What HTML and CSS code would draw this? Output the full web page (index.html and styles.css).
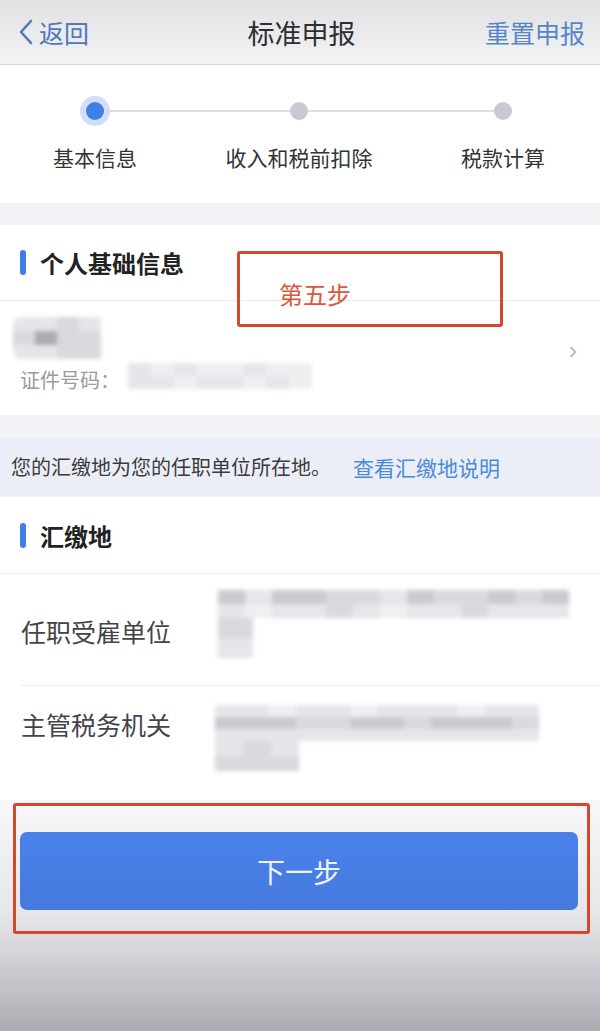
FILE: index.html
```html
<!DOCTYPE html>
<html lang="zh-CN">
<head>
    <meta charset="UTF-8">
    <meta name="viewport" content="width=device-width, initial-scale=1.0">
    <title>标准申报</title>
    <link rel="stylesheet" href="styles.css">
</head>
<body>
    <div class="page">
        <header class="nav">
            <a class="back">
                <svg class="back-icon" width="16" height="26" viewBox="0 0 16 26"><path d="M13 2 L3 13 L13 24" fill="none" stroke="#4f79b8" stroke-width="2.6" stroke-linecap="round" stroke-linejoin="round"/></svg>
                <span>返回</span>
            </a>
            <h1 class="title">标准申报</h1>
            <a class="reset">重置申报</a>
        </header>

        <section class="steps">
            <div class="track">
                <span class="dot active"></span>
                <span class="line"></span>
                <span class="dot"></span>
                <span class="line"></span>
                <span class="dot"></span>
            </div>
            <div class="labels">
                <span>基本信息</span>
                <span>收入和税前扣除</span>
                <span>税款计算</span>
            </div>
        </section>

        <section class="card personal">
            <div class="card-head"><span class="bar"></span>个人基础信息</div>
            <div class="person">
                <div class="person-info">
                    <div class="mosaic name">
                        <div class="mrow"><span class="g1"></span><span class="g1"></span><span class="g2"></span><span class="g1"></span></div>
                        <div class="mrow"><span class="g2"></span><span class="g4"></span><span class="g2"></span><span class="g2"></span></div>
                        <div class="mrow"><span class="g1"></span><span class="g1"></span><span class="g2"></span><span class="g2"></span></div>
                    </div>
                    <div class="id-row">
                        <span class="id-label">证件号码：</span>
                        <div class="mosaic idnum">
                            <div class="mrow"><span class="g1"></span><span class="g0"></span><span class="g1"></span><span class="g0"></span><span class="g0"></span><span class="g1"></span><span class="g0"></span><span class="g0"></span></div>
                            <div class="mrow"><span class="g1"></span><span class="g1"></span><span class="g0"></span><span class="g1"></span><span class="g1"></span><span class="g0"></span><span class="g1"></span><span class="g0"></span></div>
                        </div>
                    </div>
                </div>
                <svg class="arrow" width="8" height="12" viewBox="0 0 8 12"><path d="M1.5 1 L6.5 6 L1.5 11" fill="none" stroke="#b9b9be" stroke-width="1.8"/></svg>
            </div>
            <div class="note-box">第五步</div>
        </section>

        <div class="notice">您的汇缴地为您的任职单位所在地。<a class="link">查看汇缴地说明</a></div>

        <section class="card place">
            <div class="card-head"><span class="bar"></span>汇缴地</div>
            <div class="row row-first">
                <span class="row-label">任职受雇单位</span>
                <div class="mosaic wide">
                    <div class="mrow"><span class="g3"></span><span class="g1"></span><span class="g3"></span><span class="g3"></span><span class="g2"></span><span class="g2"></span><span class="g1"></span><span class="g3"></span><span class="g2"></span><span class="g2"></span><span class="g3"></span><span class="g2"></span><span class="g3"></span></div>
                    <div class="mrow"><span class="g1"></span><span class="g0"></span><span class="g1"></span><span class="g1"></span><span class="g2"></span><span class="g1"></span><span class="g0"></span><span class="g1"></span><span class="g1"></span><span class="g2"></span><span class="g1"></span><span class="g1"></span><span class="g1"></span></div>
                    <div class="mrow tail"><span class="g2"></span></div>
                    <div class="mrow tail"><span class="g1"></span></div>
                </div>
            </div>
            <div class="row row-last">
                <span class="row-label">主管税务机关</span>
                <div class="mosaic office">
                    <div class="mrow"><span class="g1"></span><span class="g1"></span><span class="g0"></span><span class="g1"></span><span class="g1"></span><span class="g0"></span><span class="g1"></span><span class="g1"></span><span class="g1"></span><span class="g0"></span><span class="g1"></span><span class="g1"></span></div>
                    <div class="mrow"><span class="g3"></span><span class="g3"></span><span class="g3"></span><span class="g2"></span><span class="g2"></span><span class="g3"></span><span class="g3"></span><span class="g2"></span><span class="g3"></span><span class="g3"></span><span class="g3"></span><span class="g2"></span></div>
                    <div class="mrow"><span class="g1"></span><span class="g1"></span><span class="g1"></span><span class="g1"></span><span class="g1"></span><span class="g1"></span><span class="g1"></span><span class="g1"></span><span class="g1"></span><span class="g1"></span><span class="g1"></span><span class="g1"></span></div>
                    <div class="mrow tail"><span class="g1"></span><span class="g2"></span><span class="g1"></span></div>
                    <div class="mrow tail"><span class="g2"></span><span class="g2"></span><span class="g2"></span></div>
                </div>
            </div>
        </section>

        <footer class="foot">
            <div class="foot-box">
                <button class="next">下一步</button>
            </div>
        </footer>
    </div>
</body>
</html>
```

FILE: styles.css
```css
body{
    margin: 0;
    font-family: "Noto Sans CJK SC", "Noto Sans", sans-serif;
    background-color: #f3f3f7;
}
.page{
    width: 600px;
    height: 1031px;
    display: flex;
    flex-direction: column;
    overflow: hidden;
}

/* top bar */
.nav{
    height: 64px;
    flex-shrink: 0;
    display: grid;
    grid-template-columns: 1fr auto 1fr;
    align-items: center;
    padding: 0 15px 0 18px;
    background: linear-gradient(#e1e1e3, #f3f3f5);
    border-bottom: 1px solid #d7d7db;
}
.back{
    display: flex;
    align-items: center;
    gap: 5px;
    color: #4f79b8;
    font-size: 25px;
    line-height: 1;
}
.title{
    margin: 0;
    font-size: 27px;
    font-weight: 400;
    color: #2e2e30;
    line-height: 1;
}
.reset{
    justify-self: end;
    color: #5585c9;
    font-size: 25px;
    line-height: 1;
}

/* steps */
.steps{
    height: 138px;
    flex-shrink: 0;
    box-sizing: border-box;
    padding-top: 37px;
    background-color: #ffffff;
}
.track{
    display: flex;
    align-items: center;
    padding: 0 88px 0 86px;
}
.dot{
    width: 18px;
    height: 18px;
    border-radius: 50%;
    background-color: #c9c9d1;
    flex-shrink: 0;
}
.dot.active{
    background-color: #3f7ee6;
    box-shadow: 0 0 0 6px rgba(120, 160, 235, 0.35);
}
.line{
    flex: 1;
    height: 2px;
    background-color: #dcdce2;
}
.labels{
    display: flex;
    gap: 44px;
    padding-left: 15px;
    margin-top: 27px;
}
.labels span{
    width: 160px;
    text-align: center;
    font-size: 21px;
    line-height: 1;
    color: #333333;
}

/* cards */
.card{
    background-color: #ffffff;
    flex-shrink: 0;
}
.personal{
    margin-top: 22px;
    height: 190px;
    position: relative;
}
.card-head{
    height: 75px;
    display: flex;
    align-items: center;
    padding-left: 20px;
    font-size: 24px;
    font-weight: 700;
    color: #222222;
    border-bottom: 1px solid #ececf0;
}
.bar{
    width: 6px;
    height: 25px;
    border-radius: 3px;
    background-color: #3f7ee6;
    margin-right: 14px;
}
.person{
    display: flex;
    align-items: center;
    justify-content: space-between;
    padding: 16px 23px 0 13px;
}
.id-row{
    display: flex;
    align-items: center;
    padding-left: 7px;
    margin-top: 2px;
}
.id-label{
    font-size: 20px;
    line-height: 1;
    color: #9a9a9f;
    width: 108px;
    margin-top: 9px;
}
.arrow{
    margin-top: -4px;
}

/* blurred placeholders */
.mosaic{
    display: flex;
    flex-direction: column;
    filter: blur(2.2px);
}
.mrow{
    display: flex;
}
.g0{ background-color: #efeff2; }
.g1{ background-color: #e6e6ea; }
.g2{ background-color: #d9d9de; }
.g3{ background-color: #cacad0; }
.g4{ background-color: #ababb2; }
.name{
    border-radius: 8px;
    overflow: hidden;
}
.name span{
    width: 22px;
    height: 14px;
}
.idnum span{
    width: 23px;
    height: 13px;
}
.wide .mrow span{
    width: 27px;
    height: 14px;
}
.wide .tail span{
    width: 35px;
    height: 20px;
}
.office .mrow span{
    width: 27px;
    height: 12px;
}
.office .tail span{
    width: 28px;
    height: 15px;
}

/* annotation */
.note-box{
    position: absolute;
    left: 237px;
    top: 26px;
    width: 266px;
    height: 76px;
    box-sizing: border-box;
    border: 3px solid #d5482c;
    border-radius: 3px;
    padding: 28px 0 0 39px;
    font-size: 24px;
    line-height: 1;
    color: #d9583a;
}

/* notice */
.notice{
    flex-shrink: 0;
    margin-top: 23px;
    height: 57px;
    display: flex;
    align-items: center;
    padding-left: 11px;
    background-color: #eceef7;
    font-size: 20px;
    color: #3a3a3c;
}
.link{
    color: #4a8bd6;
    margin-left: 22px;
    font-size: 21px;
}

/* 汇缴地 */
.place{
    margin-top: 2px;
}
.place .card-head{
    height: 76px;
}
.row{
    display: flex;
    align-items: flex-start;
    box-sizing: border-box;
}
.row-label{
    width: 197px;
    flex-shrink: 0;
    font-size: 25px;
    line-height: 1;
    color: #444446;
}
.row-first{
    height: 112px;
    margin-left: 21px;
    padding-top: 16px;
    border-bottom: 1px solid #ececf0;
}
.row-first .row-label{
    margin-top: 29px;
}
.row-last{
    height: 114px;
    padding: 19px 0 0 21px;
}
.row-last .row-label{
    margin-top: 7px;
    width: 194px;
}

/* bottom */
.foot{
    flex: 1;
    background: linear-gradient(#f8f8fa 0%, #e6e6ea 50%, #acacb4 100%);
}
.foot-box{
    margin: 3px 10px 0 13px;
    height: 131px;
    box-sizing: border-box;
    border: 3px solid #d5482c;
    border-radius: 3px;
    padding: 26px 0 0 4px;
}
.next{
    width: 558px;
    height: 78px;
    border: none;
    border-radius: 7px;
    background: linear-gradient(#4a82ea, #4679de);
    color: #eef3ff;
    font-family: "Noto Sans CJK SC", sans-serif;
    font-size: 28px;
}
```
